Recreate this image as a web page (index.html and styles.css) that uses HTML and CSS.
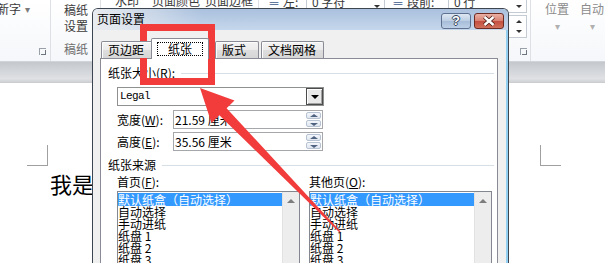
FILE: index.html
```html
<!DOCTYPE html>
<html lang="zh-CN">
<head>
<meta charset="utf-8">
<title>页面设置</title>
<link rel="stylesheet" href="styles.css">
</head>
<body>
<div class="screen">
  <div class="ribbon">
    <div class="group g-font">
      <div class="cmd-row"><span>新字</span><span class="caret">▾</span></div>
      <span class="launcher"></span>
    </div>
    <div class="group g-paper">
      <div class="big-btn">稿纸<br>设置</div>
      <div class="group-label">稿纸</div>
    </div>
    <div class="group g-bg">
      <div class="top-row"><span class="bg-1">水印</span><span class="bg-2">页面颜色</span><span class="bg-3">页面边框</span></div>
    </div>
    <div class="group g-para">
      <div class="para-cols">
        <div class="para-col col-indent">
          <div class="para-row"><span class="p-icon">≡</span><span class="p-label l-short">左:</span><span class="p-box"><span class="p-val">0 字符</span><span class="p-spin"><i class="tri-up"></i><i class="tri-down"></i></span></span></div>
          <div class="para-row"><span class="p-icon">≡</span><span class="p-label l-short">右:</span><span class="p-box"><span class="p-val">0 字符</span><span class="p-spin"><i class="tri-up"></i><i class="tri-down"></i></span></span></div>
        </div>
        <div class="para-col col-space">
          <div class="para-row"><span class="p-icon">≡</span><span class="p-label l-long">段前:</span><span class="p-box"><span class="p-val">0 行</span><span class="p-spin"><i class="tri-up"></i><i class="tri-down"></i></span></span></div>
          <div class="para-row"><span class="p-icon">≡</span><span class="p-label l-long">段后:</span><span class="p-box"><span class="p-val">0 行</span><span class="p-spin"><i class="tri-up"></i><i class="tri-down"></i></span></span></div>
        </div>
      </div>
      <span class="launcher"></span>
    </div>
    <div class="group g-arrange">
      <div class="arr-btn a-pos"><span>位置</span><span class="caret">▾</span></div>
      <div class="arr-btn a-auto"><span>自动</span><span class="caret">▾</span></div>
    </div>
  </div>
  <div class="ribbon-edge"></div>
  <div class="doc">
    <div class="marks"><span class="mark mark-l"></span><span class="mark mark-r"></span></div>
    <p class="doc-text">我是</p>
  </div>

  <div class="dialog">
    <div class="titlebar">
      <span class="title">页面设置</span>
      <div class="caption-btns">
        <span class="cap-btn help">?</span>
        <span class="cap-btn close">
          <svg width="28" height="14" viewBox="0 0 28 14"><path d="M9.5 3 L18.5 11 M18.5 3 L9.5 11" stroke="#4a1c16" stroke-width="4.2" fill="none"/><path d="M9.5 3 L18.5 11 M18.5 3 L9.5 11" stroke="#ffffff" stroke-width="2.4" fill="none"/></svg>
        </span>
      </div>
    </div>
    <div class="client">
      <div class="tabs">
        <span class="tab t-margins">页边距</span>
        <span class="tab t-paper active"><span class="focus">纸张</span></span>
        <span class="tab t-layout">版式</span>
        <span class="tab t-grid">文档网格</span>
      </div>
      <div class="panel">
        <div class="section-head"><span>纸张大小(<u>R</u>):</span><i class="rule"></i></div>
        <div class="combo"><span class="combo-val">Legal</span><span class="drop-btn"><i class="tri-black"></i></span></div>
        <div class="field-row">
          <span class="field-label">宽度(<u>W</u>):</span>
          <div class="spin-input"><span class="spin-val">21.59 厘米</span><span class="spin"><i class="spin-up"></i><i class="spin-down"></i></span></div>
        </div>
        <div class="field-row tight">
          <span class="field-label">高度(<u>E</u>):</span>
          <div class="spin-input"><span class="spin-val">35.56 厘米</span><span class="spin"><i class="spin-up"></i><i class="spin-down"></i></span></div>
        </div>
        <div class="section-head second"><span>纸张来源</span><i class="rule"></i></div>
        <div class="sources">
          <div class="source">
            <div class="src-label">首页(<u>F</u>):</div>
            <div class="listbox">
              <ul class="items">
                <li class="sel">默认纸盒（自动选择）</li>
                <li>自动选择</li>
                <li>手动进纸</li>
                <li>纸盘 1</li>
                <li>纸盘 2</li>
                <li>纸盘 3</li>
              </ul>
              <div class="vscroll"><i class="sb-up"></i></div>
            </div>
          </div>
          <div class="source">
            <div class="src-label">其他页(<u>O</u>):</div>
            <div class="listbox">
              <ul class="items">
                <li class="sel">默认纸盒（自动选择）</li>
                <li>自动选择</li>
                <li>手动进纸</li>
                <li>纸盘 1</li>
                <li>纸盘 2</li>
                <li>纸盘 3</li>
              </ul>
              <div class="vscroll"><i class="sb-up"></i></div>
            </div>
          </div>
        </div>
      </div>
    </div>
  </div>

  <svg class="annot" width="605" height="263" viewBox="0 0 605 263">
    <rect x="143.5" y="27.5" width="68" height="54" fill="none" stroke="#f23c3c" stroke-width="7"/>
    <polygon points="200,88 234.5,100.5 226.6,108.2 340.5,231.5 339.5,232.5 219.4,115.2 211.5,122.9" fill="#f23c3c"/>
  </svg>
</div>
</body>
</html>
```

FILE: styles.css
```css
* { box-sizing: border-box; margin: 0; padding: 0; }
html, body { width: 605px; height: 263px; overflow: hidden; background: #fff; }
body { font: 12px/14px "Noto Sans CJK SC", "Liberation Sans", sans-serif; color: #000; }
i { font-style: normal; display: block; }
ul { list-style: none; }

.screen { position: relative; width: 605px; height: 263px; overflow: hidden; }

/* ---------- ribbon ---------- */
.ribbon { display: flex; height: 62px; background: linear-gradient(#ffffff, #f5f7fa); border-bottom: 1px solid #d0d5dc; color: #3a3a3a; }
.group { height: 61px; border-right: 1px solid #dde1e6; flex: none; display: flex; flex-direction: column; }
.caret { color: #7a7a7a; font-size: 10px; }
.launcher { width: 7px; height: 7px; border-left: 1px solid #9aa0a8; border-top: 1px solid #9aa0a8; position: relative; }
.launcher::after { content: ""; position: absolute; right: 0; bottom: 0; width: 4px; height: 4px; border-right: 1px solid #6f757d; border-bottom: 1px solid #6f757d; }

.g-font { width: 51px; }
.g-font .cmd-row { margin: 2px 0 0 -3px; display: flex; gap: 4px; align-items: center; }
.g-font .launcher { margin: auto 4px 6px auto; }

.g-paper { width: 50px; padding-left: 13px; }
.big-btn { margin-top: 2px; line-height: 16px; }
.group-label { margin-top: auto; margin-bottom: 5px; color: #6d6d6d; }

.g-bg { width: 158px; }
.top-row { display: flex; margin-top: -6px; }
.bg-1 { margin-left: 14px; }
.bg-2 { margin-left: 13px; }
.bg-3 { margin-left: 5px; }

.g-para { width: 272px; }
.para-cols { display: flex; margin-top: -10px; }
.para-col { display: flex; flex-direction: column; gap: 2px; }
.col-indent { margin-left: 9px; }
.col-space { margin-left: 7px; }
.para-row { display: flex; align-items: center; height: 23px; }
.p-icon { width: 12px; color: #3c5a8a; font-size: 12px; }
.p-label { margin-left: 3px; }
.l-short { width: 23px; }
.l-long { width: 41px; margin-left: 3px; }
.p-box { width: 79px; height: 23px; border: 1px solid #c5cbd3; background: #fff; display: flex; align-items: center; }
.p-val { flex: 1; padding-left: 5px; }
.p-spin { width: 15px; height: 100%; display: flex; flex-direction: column; justify-content: space-around; align-items: center; }
.tri-up { width: 0; height: 0; border-left: 3px solid transparent; border-right: 3px solid transparent; border-bottom: 3px solid #333; }
.tri-down { width: 0; height: 0; border-left: 3px solid transparent; border-right: 3px solid transparent; border-top: 3px solid #333; }
.g-para .launcher { align-self: flex-end; margin: auto 3px 6px 0; }

.g-arrange { flex-direction: row; border-right: 0; color: #8b8b8b; }
.arr-btn { display: flex; flex-direction: column; align-items: center; margin-top: 2px; }
.arr-btn .caret { color: #b0b0b0; margin-top: 3px; }
.a-pos { margin-left: 14px; }
.a-auto { margin-left: 11px; }

.ribbon-edge { height: 21px; background: linear-gradient(#c4c8cd, #dfe1e4 80%, #c9cbce); }

/* ---------- document ---------- */
.doc { background: #fff; padding: 62px 44px 0 27px; }
.marks { display: flex; justify-content: space-between; }
.mark { width: 21px; height: 21px; border-bottom: 1px solid #a0a0a0; }
.mark-l { border-right: 1px solid #a0a0a0; }
.mark-r { border-left: 1px solid #a0a0a0; }
.doc-text { margin: 5px 0 0 23px; font-size: 22px; line-height: 24px; }

/* ---------- dialog ---------- */
.dialog { position: absolute; left: 92px; top: 8px; width: 417px; height: 262px; border: 1px solid #3d4550; border-bottom: 0; border-radius: 6px 6px 0 0; background: #f0f0f0; display: flex; flex-direction: column; overflow: hidden; }
.titlebar { height: 21px; display: flex; flex: none; background: linear-gradient(to right, #e9ecf0 0, rgba(233,236,240,0) 110px), linear-gradient(#aac0dd, #c5d7ec); }
.title { margin: 3px 0 0 4px; }
.caption-btns { margin: 4px 4px 0 auto; display: flex; gap: 3px; }
.cap-btn { width: 30px; height: 16px; border-radius: 3px; display: flex; align-items: center; justify-content: center; }
.help { border: 1px solid #5f7190; background: linear-gradient(#dde7f3, #bccee3 50%, #a6bcd8 51%, #bdd0e7); color: #fff; font: bold 13px/14px "Liberation Sans", sans-serif; text-shadow: 1px 0 #34435a, -1px 0 #34435a, 0 1px #34435a, 0 -1px #34435a; }
.close { border: 1px solid #6d2b22; background: linear-gradient(#eab1a4, #d98071 50%, #c44d3e 51%, #d0705c); }

.client { flex: 1; display: flex; flex-direction: column; padding: 0 10px 0 7px; box-shadow: inset -2px 0 0 #93cff0; }
.tabs { display: flex; align-items: flex-end; height: 28px; flex: none; padding-left: 1px; position: relative; z-index: 1; }
.tab { height: 17px; padding: 1px 0 0 6px; border: 1px solid #898c95; border-bottom: 0; border-radius: 2px 2px 0 0; background: linear-gradient(#f3f3f3, #ebebeb 50%, #dedede 51%, #d6d6d6); box-shadow: inset 1px 1px 0 #fcfcfc; line-height: 14px; white-space: nowrap; }
.t-margins { width: 52px; }
.t-paper { width: 58px; margin-left: -2px; }
.t-layout { width: 44px; margin-left: 6px; }
.t-grid { width: 63px; margin-left: 2px; }
.tab.active { height: 21px; margin-bottom: -1px; background: #fff; box-shadow: none; padding: 3px 0 0 5px; }
.focus { display: block; width: 46px; height: 14px; border: 1px dotted #000; padding-left: 10px; line-height: 12px; }

.panel { flex: 1; border: 1px solid #898c95; background: #fff; padding: 7px 3px 0 7px; }
.section-head { display: flex; align-items: center; gap: 6px; height: 14px; }
.section-head.second { margin-top: 7px; }
.rule { flex: 1; height: 1px; background: #d5dfe5; }

.combo { display: flex; width: 207px; height: 19px; margin: 7px 0 0 9px; border: 1px solid #8f9090; }
.combo-val { flex: 1; padding-left: 2px; font: 11px/17px "Liberation Mono", monospace; letter-spacing: -0.6px; }
.drop-btn { width: 17px; height: 17px; background: #e9e9e9; border: 1px solid #4c4c4c; box-shadow: inset 1px 1px 0 #fff, inset -1px -1px 0 #a3a3a3; display: flex; align-items: center; justify-content: center; }
.tri-black { width: 0; height: 0; border-left: 4px solid transparent; border-right: 4px solid transparent; border-top: 4px solid #000; }

.field-row { display: flex; align-items: center; margin: 4px 0 0 9px; height: 19px; }
.field-row.tight { margin-top: 3px; }
.field-label { width: 56px; }
.spin-input { width: 150px; height: 19px; border: 1px solid #a5a7ab; display: flex; }
.spin-val { flex: 1; padding-left: 1px; line-height: 17px; }
.spin { width: 16px; display: flex; flex-direction: column; gap: 1px; padding: 1px 1px 1px 0; }
.spin i { flex: 1; border: 1px solid #b7c2d2; border-radius: 2px; background: linear-gradient(#f4f7fb, #dfe6ef); position: relative; }
.spin i::after { content: ""; position: absolute; left: 3px; width: 0; height: 0; border-left: 4px solid transparent; border-right: 4px solid transparent; }
.spin-up::after { top: 1px; border-bottom: 3px solid #4f6381; }
.spin-down::after { top: 2px; border-top: 3px solid #4f6381; }

.sources { display: flex; gap: 9px; margin: 3px 0 0 9px; }
.src-label { height: 14px; }
.listbox { width: 183px; height: 80px; margin-top: 2px; border: 1px solid #828790; display: flex; }
.items { flex: 1; padding-top: 1px; line-height: 12px; white-space: nowrap; overflow: hidden; }
.items li { height: 12px; }
.items li.sel { height: 13px; line-height: 13px; background: #3399ff; color: #fff; }
.vscroll { width: 17px; background: #ededed; border-left: 1px solid #e2e2e2; }
.sb-up { height: 17px; display: flex; align-items: center; justify-content: center; }
.sb-up::after { content: ""; width: 0; height: 0; border-left: 4px solid transparent; border-right: 4px solid transparent; border-bottom: 4px solid #7d7d7d; }

/* ---------- annotation ---------- */
.annot { position: absolute; left: 0; top: 0; pointer-events: none; }
```
